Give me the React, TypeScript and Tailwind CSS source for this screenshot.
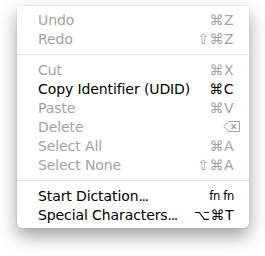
import React from 'react';

type Item = { label: React.ReactNode; keys?: React.ReactNode; enabled?: boolean } | 'sep';

function DeleteKey() {
  return (
    <svg width="17" height="11" viewBox="0 0 17 11" className="block">
      <path d="M5.5 0.5 H16.5 V10.5 H5.5 L0.7 5.5 Z" fill="none" stroke="currentColor" strokeWidth="1" />
      <path d="M8.5 3 L13 8 M13 3 L8.5 8" stroke="currentColor" strokeWidth="1.3" />
    </svg>
  );
}

// narrow mac-style ellipsis
const dots = <span className="tracking-[-1.3px]">...</span>;

const items: Item[] = [
  { label: 'Undo', keys: '⌘Z' },
  { label: 'Redo', keys: '⇧⌘Z' },
  'sep',
  { label: 'Cut', keys: '⌘X' },
  { label: 'Copy Identifier (UDID)', keys: '⌘C', enabled: true },
  { label: 'Paste', keys: '⌘V' },
  { label: 'Delete', keys: <DeleteKey /> },
  { label: 'Select All', keys: '⌘A' },
  { label: 'Select None', keys: '⇧⌘A' },
  'sep',
  { label: <>Start Dictation{dots}</>, keys: <span className="text-[11.5px] tracking-[-0.3px]">fn fn</span>, enabled: true },
  { label: <>Special Characters{dots}</>, keys: '⌥⌘T', enabled: true },
];

export default function App() {
  return (
    <div className="w-[265px] h-[256px] bg-white pl-[17px] pt-[6px] font-['DejaVu_Sans',sans-serif]">
      <div className="w-[232px] bg-white rounded-b-[5px] py-[4px] shadow-[0_8px_18px_rgba(0,0,0,0.38),0_0_1px_rgba(0,0,0,0.35)]">
        {items.map((it, i) =>
          it === 'sep' ? (
            <div key={i} className="h-[12px] flex items-center">
              <div className="w-full h-px bg-[#e3e3e3]" />
            </div>
          ) : (
            <div
              key={i}
              className={`h-[19px] flex items-center justify-between pl-[21px] pr-[15px] text-[14px] leading-none ${
                it.enabled ? 'text-black' : 'text-[#a3a3a3]'
              }`}
            >
              <span className="tracking-[-0.1px]">{it.label}</span>
              <span className={it.label === 'Delete' ? '-mr-[6px]' : 'tracking-[0.5px]'}>{it.keys}</span>
            </div>
          )
        )}
      </div>
    </div>
  );
}
